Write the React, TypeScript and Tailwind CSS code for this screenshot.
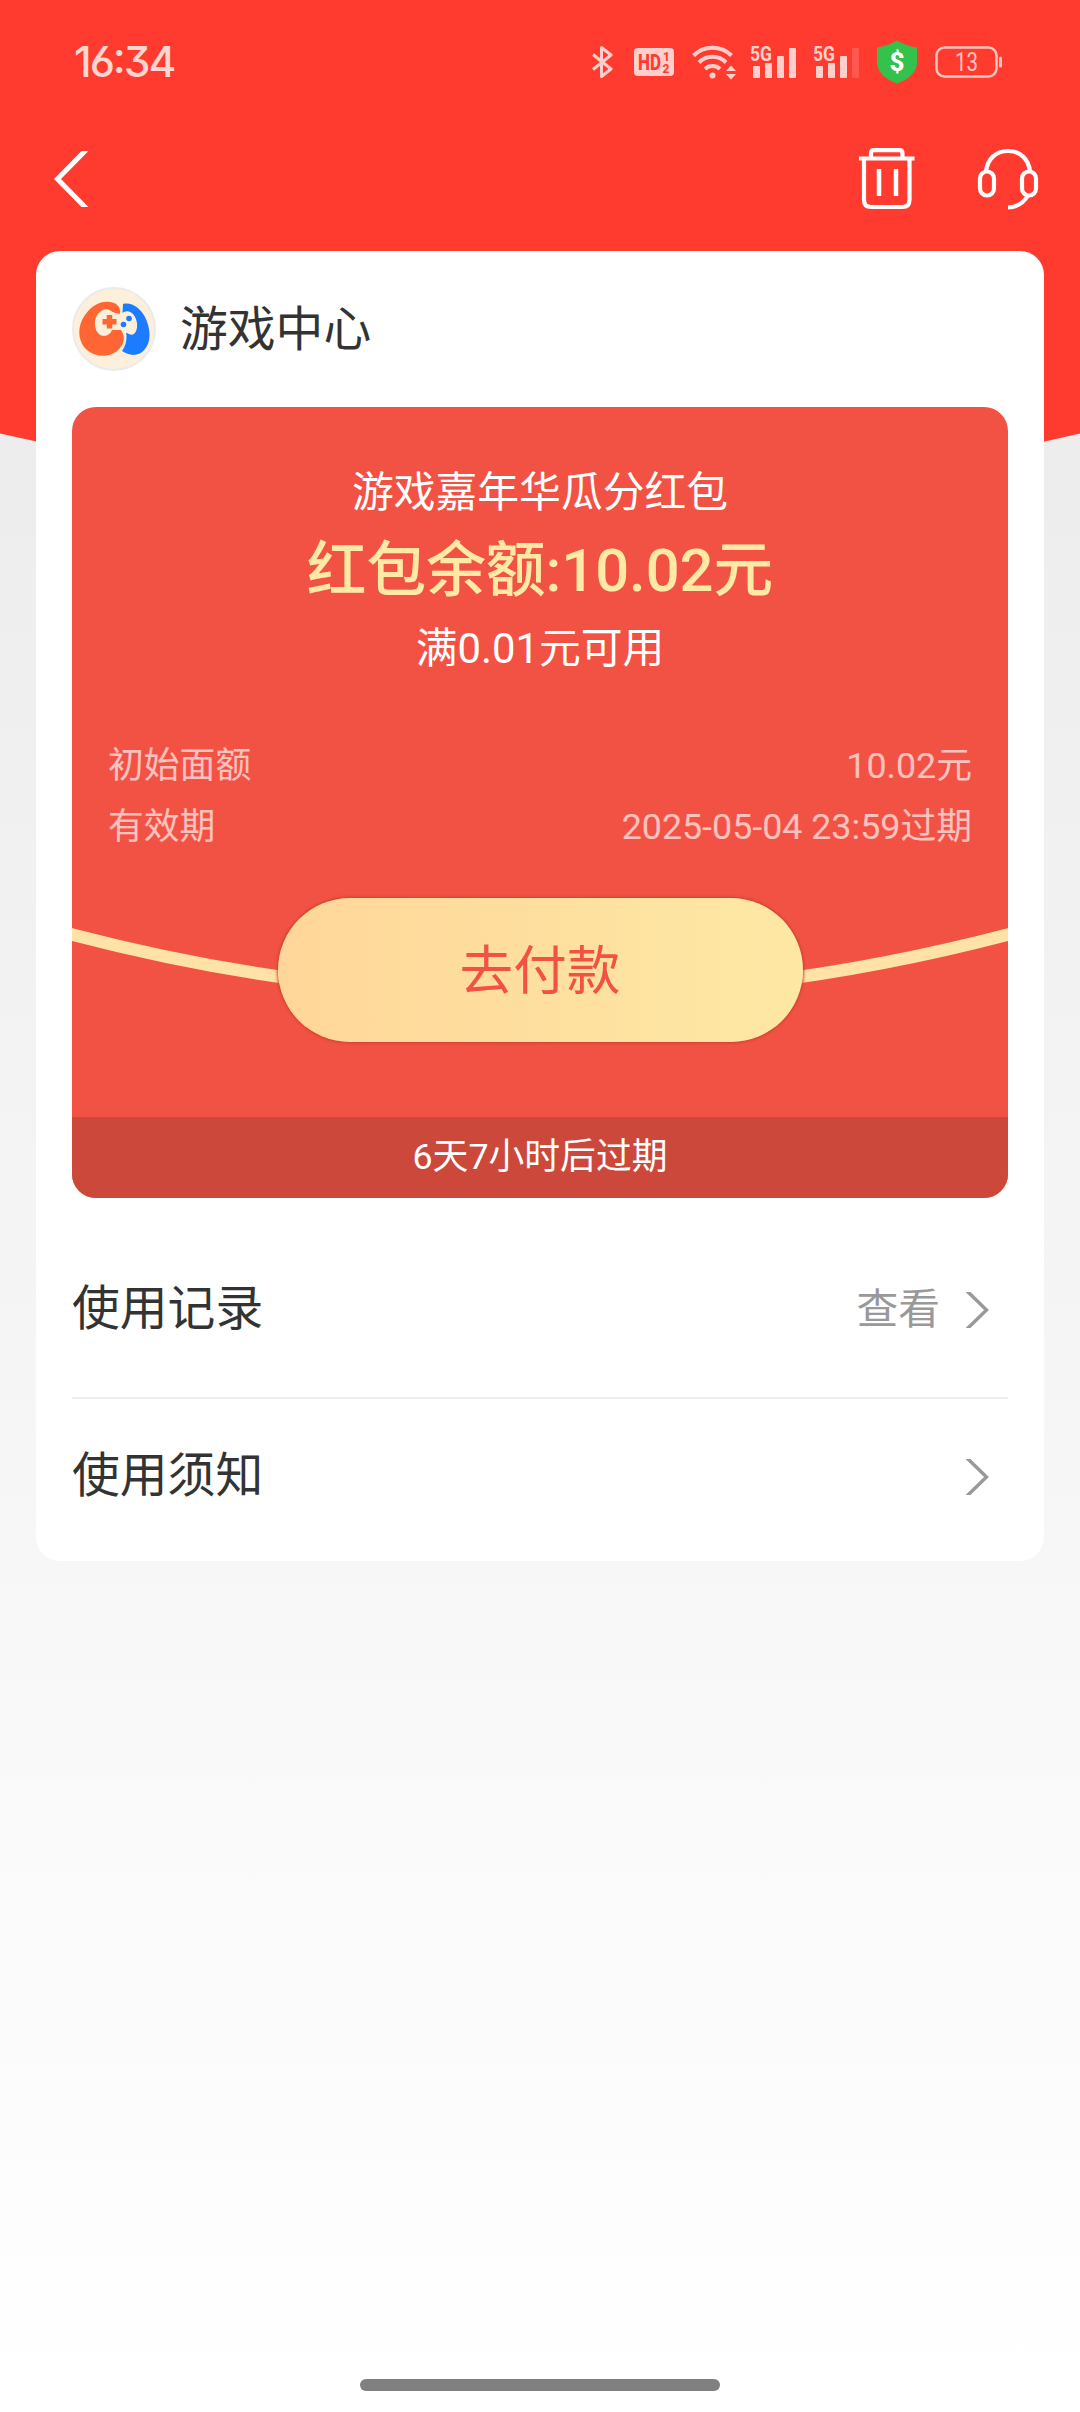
const details = [
  { label: "初始面额", value: "10.02元" },
  { label: "有效期", value: "2025-05-04 23:59过期" },
];

const links = [
  { label: "使用记录", hint: "查看" },
  { label: "使用须知", hint: "" },
];

const Signal = ({ weak = false }: { weak?: boolean }) => (
  <svg className="overflow-visible" width="46" height="34" viewBox="0 0 46 34" fill="#ffd0cb">
    <text x="0" y="16" fontSize="20" fontWeight="700" fontFamily="Roboto" textLength="22" lengthAdjust="spacingAndGlyphs">
      5G
    </text>
    <rect x="3" y="21" width="7" height="12" rx="1" />
    <rect x="15" y="18" width="7" height="15" rx="1" />
    <rect x="27" y="11" width="7" height="22" rx="1" />
    <rect x="39" y="3" width="7" height="30" rx="1" opacity={weak ? 0.2 : 1} />
  </svg>
);

const StatusBar = () => (
  <div className="flex h-[124px] items-center justify-between pl-[74px] pr-[78px]">
    <span className="font-['Inter'] text-[42.5px] leading-none font-medium tracking-[-2px] text-[#ffd5d0] [font-feature-settings:'cv03','cv09','case']">
      16:34
    </span>
    <div className="flex items-center">
      <svg className="mr-[21px]" width="21" height="34" viewBox="0 0 21 34" fill="none" stroke="#ffd0cb" strokeWidth="3" strokeLinejoin="round">
        <path d="M1 9.5 L19 24 L9.5 31.5 V2.5 L19 10 L1 24.5" />
      </svg>
      <svg className="mr-[18px]" width="40" height="34" viewBox="0 0 40 34">
        <rect y="3" width="40" height="28" rx="4" fill="#ffd0cb" />
        <g fill="#ff3b30" fontFamily="Roboto" fontWeight="800">
          <text x="4" y="25" fontSize="22" textLength="23" lengthAdjust="spacingAndGlyphs">HD</text>
          <text x="29" y="15.500" fontSize="12">1</text>
          <text x="28.500" y="28" fontSize="12">2</text>
        </g>
      </svg>
      <svg className="mr-[13px]" width="45" height="36" viewBox="0 0 45 36" fill="none" stroke="#ffd0cb" strokeWidth="4">
        <path d="M1.500 11.500 A27 27 0 0 1 39.500 11.500" />
        <path d="M7 18.500 A19 19 0 0 1 34 18.500" />
        <path d="M13 25 A11 11 0 0 1 28 25" />
        <circle cx="20.500" cy="31.500" r="3" fill="#ffd0cb" stroke="none" />
        <path d="M34 27 L39 21.500 L44 27 Z M34 30 L39 35.500 L44 30 Z" fill="#ffd0cb" stroke="none" />
      </svg>
      <Signal />
      <div className="w-[17px]" />
      <Signal weak />
      <svg className="ml-[18px]" width="40" height="44" viewBox="0 0 40 44">
        <path d="M20 0.500 Q29 6 40 7.500 V24 Q38 37 20 43.500 Q2 37 0 24 V7.500 Q11 6 20 0.500 Z" fill="#34c14c" />
        <text x="20" y="30.500" fontSize="26" fontWeight="800" fontFamily="Roboto" textAnchor="middle" fill="#fff">
          $
        </text>
      </svg>
      <svg className="ml-[18px]" width="67" height="32" viewBox="0 0 67 32">
        <rect x="1.500" y="1.500" width="60" height="29" rx="8" fill="none" stroke="#ffc4be" strokeWidth="2.500" />
        <rect x="64" y="10.500" width="3" height="11" rx="1.500" fill="#ffc4be" />
        <text x="31.500" y="25" fontSize="25" fontFamily="Roboto" textAnchor="middle" textLength="23" lengthAdjust="spacingAndGlyphs" fill="#ffc4be">
          13
        </text>
      </svg>
    </div>
  </div>
);

const NavBar = () => (
  <div className="flex h-[127px] items-center justify-between pb-[17px] pr-[41px] pl-[53px]">
    <svg width="35" height="56" viewBox="0 0 35 56" fill="none" stroke="#fff" strokeWidth="5">
      <path d="M34 -2 L4.500 28 L34 58" />
    </svg>
    <div className="flex items-center gap-[62px]">
      <svg width="57" height="63" viewBox="0 0 57 63" fill="none" stroke="#fff" strokeWidth="4.200">
        <path d="M1 10.500 H56.500" />
        <path d="M13 10 V5.500 Q13 2.200 16 2.200 H41 Q44.500 2.200 44.500 5.500 V10" />
        <path d="M6 11 V52 Q6 59 13 59 H44.500 Q51.500 59 51.500 52 V11" />
        <path d="M21 21 V48 M38 21 V48" strokeWidth="4.500" />
      </svg>
      <svg width="62" height="63" viewBox="0 0 62 63" fill="none" stroke="#fff" strokeWidth="4.200">
        <path d="M9 24 C10 11 19 3 31 3 C43 3 52 11 53 24" />
        <rect x="3" y="23.500" width="14" height="24" rx="7" />
        <rect x="45" y="23.500" width="14" height="24" rx="7" />
        <path d="M51 47.500 Q44 59 31 59.500" />
      </svg>
    </div>
  </div>
);

const GameLogo = () => (
  <svg width="84" height="84" viewBox="0 0 84 84">
    <circle cx="42" cy="42" r="41" fill="#fcefdc" stroke="#ebebeb" strokeWidth="2" />
    <path d="M51 17 C60 15 68 21 73 30 C79 42 79 55 73 62 C67 70 57 69 50 64 C57 54 55 44 50 34 Z" fill="#1c7bff" />
    <path
      d="M48 27 C49 21 46 16 38 15 C27 13 16 21 10 33 C5 44 7 56 15 63 C24 71 40 71 48 61 C53 55 53 49 49 43 L38 42 C36 46 34 48 30 48 C26 47 23 42 23 36 C23 27 29 22 37 24 C42 25 45 27 48 27 Z"
      fill="#ff6633"
    />
    <path
      d="M26 28 C29 22 35 21 39 24 C43 27 47 28 52 25 C58 22 64 28 65 36 C66 44 62 50 57 47 C52 45 51 43 47 43 H40 C38 49 30 51 26 46 C22 41 23 33 26 28 Z"
      fill="#fcefdc"
    />
    <path d="M37.500 28 V41.500 M30.500 34.700 H44.500" stroke="#ff6633" strokeWidth="5.500" />
    <circle cx="51.500" cy="37.500" r="2.800" fill="#1c7bff" />
    <circle cx="57" cy="31.500" r="2.800" fill="#1c7bff" />
  </svg>
);

const Chevron = () => (
  <svg width="24" height="36" viewBox="0 0 24 36" fill="none" stroke="#999" strokeWidth="3.400">
    <path d="M0 -2 L20.500 18 L0 38" />
  </svg>
);

const Coupon = () => (
  <div className="relative flex h-[791px] flex-col overflow-hidden rounded-3xl bg-[#f25244] text-white">
    <svg className="absolute top-0 left-0" width="936" height="791" viewBox="0 0 936 791" fill="none">
      <path d="M-10 524.900 L0 527.500 Q468 650 936 527.500 L946 524.900" stroke="#fee2a6" strokeWidth="12.500" />
    </svg>
    <div className="relative flex flex-1 flex-col items-center">
      <div className="mt-[56px] text-[41.8px] leading-[60px]">游戏嘉年华瓜分红包</div>
      <div className="mt-[6px] text-[59.7px] leading-[84px] font-medium text-[#ffe9a5]">红包余额:10.02元</div>
      <div className="mt-[6px] text-[41.8px] leading-[60px]">满0.01元可用</div>
      <div className="mt-[57px] w-full px-9 text-[35.8px] leading-[61px] text-white/65">
        {details.map((item) => (
          <div key={item.label} className="flex justify-between">
            <span>{item.label}</span>
            <span>{item.value}</span>
          </div>
        ))}
      </div>
      <button className="mt-10 h-36 w-[525px] rounded-full bg-linear-to-r from-[#ffd699] to-[#fde8a4] pt-1 text-[53.6px] leading-none text-[#f25244] shadow-[0_0_3px_1px_#c8432f]">
        去付款
      </button>
    </div>
    <div className="relative flex h-[81px] items-center justify-center bg-[#cc483b] text-[35.8px]">
      6天7小时后过期
    </div>
  </div>
);

const App = () => {
  return (
    <div className="relative flex h-[2412px] w-[1080px] flex-col overflow-hidden bg-linear-to-b from-[#e9e9e9] to-white font-['Roboto','Noto_Sans_CJK_SC',sans-serif]">
      <svg className="absolute top-0 left-0" width="1080" height="500" viewBox="0 0 1080 500">
        <path d="M0 0 H1080 V433.500 Q540 560 0 433.500 Z" fill="#ff3b30" />
      </svg>
      <div className="relative flex flex-1 flex-col">
        <StatusBar />
        <NavBar />
        <main className="mx-9 h-[1310px] rounded-3xl bg-white px-9">
          <header className="flex h-[156px] items-center gap-6 text-[47.8px] text-[#333]">
            <GameLogo />
            <h1 className="pt-1">游戏中心</h1>
          </header>
          <Coupon />
          <nav className="pt-[35px] text-[47.8px] text-[#333]">
            {links.map((link) => (
              <div
                key={link.label}
                className="flex h-[166px] items-center justify-between border-b-2 border-[#eee] pr-[18px] pb-[10px] last:border-0"
              >
                <span>{link.label}</span>
                <div className="flex items-center gap-[26px]">
                  <span className="text-[41.8px] text-[#999]">{link.hint}</span>
                  <Chevron />
                </div>
              </div>
            ))}
          </nav>
        </main>
        <div className="mx-auto mt-auto mb-[21px] h-3 w-[360px] rounded-full bg-[#808080]" />
      </div>
    </div>
  );
};

export default App;
